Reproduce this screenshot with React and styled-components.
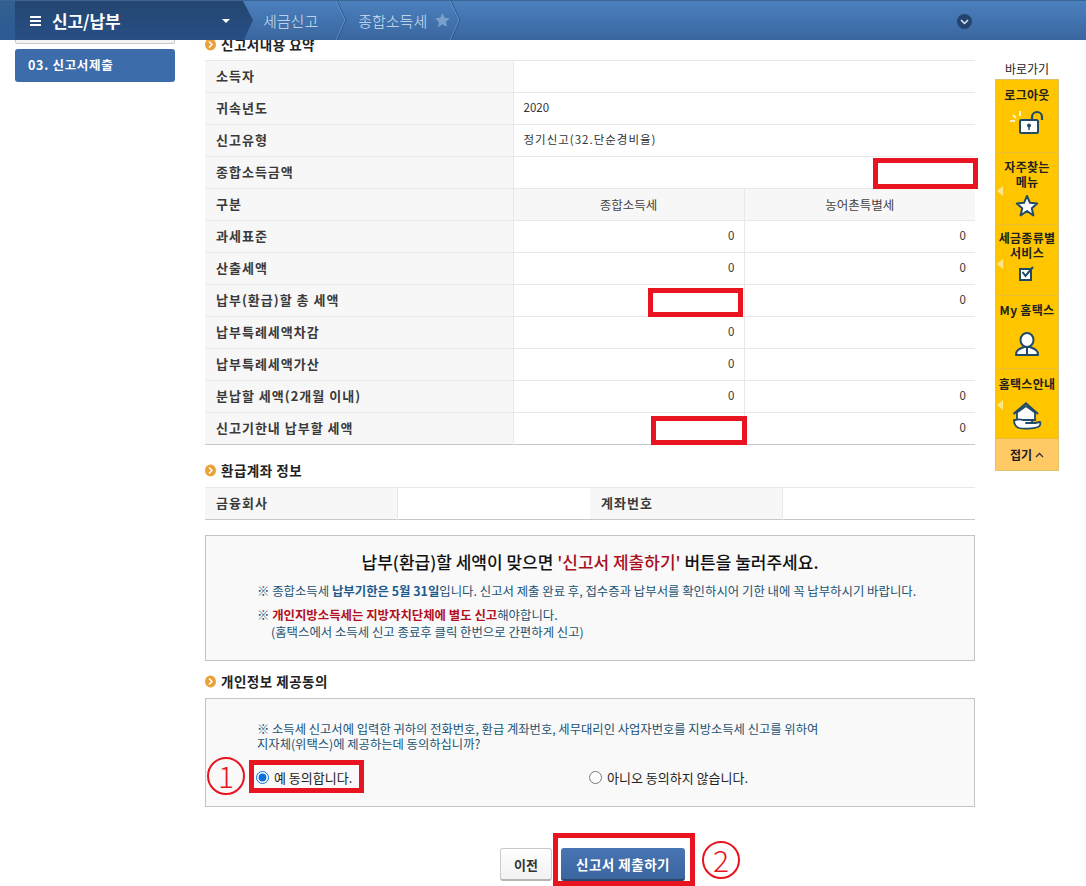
import styled, { createGlobalStyle } from 'styled-components'

const GlobalStyle = createGlobalStyle`
html, body {
  margin: 0;
  padding: 0;
  background: #fff;
  overflow: hidden;
}
body {
  font-family: "Noto Sans CJK KR", "Liberation Sans", sans-serif;
  font-size: 12px;
  color: #333;
}
* { box-sizing: border-box; }
`;

//Top bar
const TopBar = styled.header`
position: fixed;
top: 0;
left: 0;
right: 0;
height: 40px;
z-index: 5;
display: flex;
align-items: stretch;
background: linear-gradient(#4a80bd, #3a669f);
border-top: 1px solid #3a6496;
`;

const EdgeStrip = styled.div`
width: 15px;
background: linear-gradient(#31608f, #2c5a94);
`;

const MenuHead = styled.div`
width: 238px;
display: flex;
align-items: center;
padding: 0 23px 0 15px;
color: #fff;
background: linear-gradient(#24466f, #274f86);
clip-path: polygon(0 0, 228px 0, 238px 19px, 229px 100%, 0 100%);
`;

const MenuTitle = styled.span`
font-size: 17px;
font-weight: 700;
letter-spacing: -0.1px;
margin-left: 11px;
flex: 1;
`;

const Caret = styled.span`
width: 0;
height: 0;
border: 4px solid transparent;
border-top: 4px solid #fff;
border-bottom: 0;
`;

const Crumb = styled.div`
display: flex;
align-items: center;
color: #d3e1f2;
font-size: 15px;
font-weight: 300;
height: 100%;
padding-left: ${p => p.$pad}px;
`;

const StarSlot = styled.span`
display: flex;
margin-left: 8px;
`;

const CrumbLine = styled.svg`
width: 11px;
height: 39px;
margin-left: ${p => p.$gap}px;
`;

const RoundToggle = styled.span`
position: absolute;
left: 957px;
top: 13px;
width: 15px;
height: 15px;
border-radius: 50%;
background: #23446f;
display: flex;
align-items: center;
justify-content: center;
`;

//Page columns
const Page = styled.div`
height: 886px;
overflow: hidden;
display: grid;
grid-template-columns: 205px 770px 84px;
`;

const Side = styled.aside`
padding: 36px 30px 0 15px;
display: flex;
flex-direction: column;
gap: 5px;
`;

const SideStep = styled.div`
height: 8px;
border: 1px solid #c8c8c8;
border-radius: 2px;
background: #f4f4f4;
`;

const SideActive = styled.div`
height: 33px;
background: #3d6cab;
border-radius: 3px;
color: #fff;
font-size: 12.5px;
font-weight: 700;
line-height: 31px;
padding-left: 13px;
letter-spacing: 0.7px;
`;

const Main = styled.main`
padding-top: 36px;
`;

const Heading = styled.h3`
margin: ${p => p.$top || 0}px 0 ${p => p.$bottom || 8}px;
display: flex;
align-items: center;
gap: 5px;
height: 16px;
font-size: 13.5px;
font-weight: 700;
color: #222;
letter-spacing: 0.5px;
`;

//Tables
const Table = styled.table`
width: 770px;
table-layout: fixed;
border-collapse: collapse;
border-top: 1px solid #c8c8c8;
border-bottom: 1px solid #c8c8c8;
`;

const Label = styled.th`
height: 32px;
background: #f7f7f7;
border-top: 1px solid #e8e8e8;
border-right: 1px solid #e8e8e8;
padding: 0 0 3px 11px;
text-align: left;
font-size: 13px;
font-weight: 700;
color: #3a3a3a;
letter-spacing: 1px;
`;

const Head = styled.th`
background: #f7f7f7;
border-top: 1px solid #e8e8e8;
border-left: 1px solid #e8e8e8;
padding-bottom: 2px;
font-size: 12.5px;
font-weight: 400;
color: #444;
`;

const Cell = styled.td`
position: relative;
height: 32px;
border-top: 1px solid #e8e8e8;
border-left: 1px solid #e8e8e8;
padding: ${p => (p.$left ? '0 0 3px 10px' : '0 9px 3px 0')};
text-align: ${p => (p.$left ? 'left' : 'right')};
font-size: 11.5px;
letter-spacing: ${p => (p.$wide ? '1px' : '0')};
color: #333;
`;

const RedBox = styled.span`
position: absolute;
border: 5px solid #e8141f;
left: ${p => p.$l}px;
top: ${p => p.$t}px;
width: ${p => p.$w}px;
height: ${p => p.$h}px;
`;

//Notice boxes
const NoticeBox = styled.section`
margin-top: ${p => p.$top}px;
height: ${p => p.$h}px;
background: #f9f9f9;
border: 1px solid #c4c4c4;
padding-top: ${p => p.$pad}px;
`;

const NoticeTitle = styled.p`
margin: 0 0 9px;
text-align: center;
font-size: 17px;
font-weight: 500;
line-height: 24px;
color: #111;
`;

const Emph = styled.span`
color: #a8101f;
`;

const Note = styled.p`
margin: ${p => p.$top || 0}px 0 0 ${p => p.$left || 51}px;
font-size: ${p => p.$size || 12.4}px;
line-height: ${p => p.$lh || 16}px;
color: #1a5272;
font-weight: 400;
white-space: nowrap;
`;

const Blue = styled.b`
color: #1f5a8c;
font-weight: 700;
`;

const Crimson = styled.b`
color: #b30f22;
font-weight: 700;
`;

const RadioRow = styled.div`
display: grid;
grid-template-columns: 333px 1fr;
margin: 17px 0 0 50px;
`;

const RadioLabel = styled.label`
position: relative;
display: inline-flex;
align-items: center;
gap: 5px;
height: 16px;
font-size: 13px;
color: #222;
`;

const Radio = styled.input`
margin: 0;
width: 13px;
height: 13px;
accent-color: #0a6fd8;
`;

const Mark = styled.span`
position: absolute;
left: ${p => p.$l}px;
top: ${p => p.$t}px;
width: 38px;
height: 38px;
border: 2px solid #e8141f;
border-radius: 50%;
color: #e8141f;
font-size: 30px;
font-weight: 300;
line-height: 33px;
text-align: center;
`;

//Buttons
const Buttons = styled.div`
display: flex;
justify-content: center;
gap: 9px;
margin-top: 41px;
padding-left: 5px;
`;

const PrevButton = styled.button`
width: 52px;
height: 33px;
border: 1px solid #c9c9c9;
border-bottom: 2px solid #b5b5b5;
border-radius: 3px;
background: linear-gradient(#fff, #f1f1f1);
font: 700 13px "Noto Sans CJK KR", sans-serif;
color: #333;
`;

const SubmitWrap = styled.div`
position: relative;
`;

const SubmitButton = styled.button`
width: 124px;
height: 33px;
border: 0;
border-bottom: 2px solid #28466e;
border-radius: 3px;
background: linear-gradient(#4876b3, #3a659f);
font: 700 13.5px "Noto Sans CJK KR", sans-serif;
color: #fff;
letter-spacing: 0.5px;
`;

//Right rail
const Rail = styled.aside`
padding: 61px 0 0 20px;
`;

const RailTitle = styled.div`
width: 64px;
height: 18px;
line-height: 15px;
text-align: center;
font-size: 12px;
color: #222;
`;

const RailBox = styled.div`
width: 64px;
border: 1px solid #dcc26a;
background: #ffc600;
`;

const RailItem = styled.div`
position: relative;
height: ${p => p.$h}px;
border-bottom: 1px solid #e8bd3b;
padding-top: ${p => p.$pad || 8}px;
display: flex;
flex-direction: column;
align-items: center;
font-size: 12px;
font-weight: 700;
line-height: 14.5px;
letter-spacing: 0.3px;
color: #222;
text-align: center;
white-space: nowrap;
${p => p.$arrow && `
&::before {
  content: '';
  position: absolute;
  left: 1px;
  top: ${p.$arrow}px;
  border: 5px solid transparent;
  border-right: 6px solid #ffe58c;
  border-left: 0;
}`}
`;

const IconSlot = styled.span`
display: flex;
margin-top: ${p => p.$top || 6}px;
`;

const Fold = styled.div`
height: 31px;
background: #ffca66;
font-size: 12px;
font-weight: 700;
color: #222;
display: flex;
align-items: center;
justify-content: center;
gap: 3px;
`;

const Bullet = () => (
    <svg width="11" height="13" viewBox="0 0 11 13">
        <ellipse cx="5.5" cy="6.5" rx="5.5" ry="6" fill="#e9a23b" />
        <path d="M4 3.5 7 6.5 4 9.5" fill="none" stroke="#fff" strokeWidth="1.5" />
    </svg>
);

const Chevron = ({ gap }) => (
    <CrumbLine $gap={gap} viewBox="0 0 11 39">
        <path d="M1 0 10 19 1 39" fill="none" stroke="#2d5688" strokeWidth="1" />
        <path d="M0 0 9 19 0 39" fill="none" stroke="#78a2d2" strokeWidth="0.6" />
    </CrumbLine>
);

const LockIcon = () => (
    <svg width="38" height="24" viewBox="0 0 38 24">
        <path d="M24 11V7a5 5 0 0 1 10 0v3" fill="none" stroke="#1f4a68" strokeWidth="2.2" />
        <rect x="12" y="10" width="18" height="13" rx="1.5" fill="#fff" stroke="#1f4a68" strokeWidth="2" />
        <circle cx="21" cy="15.500" r="2" fill="#1f4a68" />
        <path d="M21 16v4" stroke="#1f4a68" strokeWidth="1.4" />
        <path d="M2 11h5M5 5l3 3M12 1v5" stroke="#fff" strokeWidth="1.6" />
    </svg>
);

const StarIcon = () => (
    <svg width="24" height="23" viewBox="0 0 24 23">
        <path d="M12 2l3 6.8 7.2.7-5.4 4.8 1.6 7.2L12 17l-6.4 4.5 1.6-7.2L1.8 9.500l7.200-.7z" fill="#fff" stroke="#1f4a68" strokeWidth="2" strokeLinejoin="round" />
    </svg>
);

const CheckIcon = () => (
    <svg width="20" height="15" viewBox="0 0 20 15">
        <rect x="3" y="3" width="11" height="11" fill="#fff" stroke="#1f4a68" strokeWidth="2" />
        <path d="M5.500 6 8.500 10 16 1" fill="none" stroke="#1f4a68" strokeWidth="2" />
    </svg>
);

const PersonIcon = () => (
    <svg width="26" height="25" viewBox="0 0 26 25">
        <path d="M2 23c0-5 3-6 8-8h6c5 2 8 3 8 8z" fill="#fff" stroke="#1f4a68" strokeWidth="2" strokeLinejoin="round" />
        <ellipse cx="13" cy="8" rx="6.500" ry="7" fill="#fff" stroke="#1f4a68" strokeWidth="2" />
        <path d="M13 15v7" stroke="#1f4a68" strokeWidth="2" />
    </svg>
);

const HomeIcon = () => (
    <svg width="30" height="28" viewBox="0 0 30 28">
        <path d="M1.500 12 14 1.500l12 10.500" fill="none" stroke="#1f4a68" strokeWidth="2.200" />
        <path d="M5 10.500V18h18v-7.500L14 4z" fill="#fff" stroke="#1f4a68" strokeWidth="1.800" />
        <path d="M2 19c3-2 6-2 9-1h7c3 0 3 3 0 3h-4 9l5-1c1 2 0 4-2 5-5 2-15 2-19 1-3-1-5-4-5-8z" fill="#fff" stroke="#1f4a68" strokeWidth="1.800" strokeLinejoin="round" />
    </svg>
);

const amountRows = [
    ['과세표준', '0', '0'],
    ['산출세액', '0', '0'],
    ['납부(환급)할 총 세액', '', '0', { l: -97, t: 3, w: 95, h: 29 }],
    ['납부특례세액차감', '0', ''],
    ['납부특례세액가산', '0', ''],
    ['분납할 세액(2개월 이내)', '0', '0'],
    ['신고기한내 납부할 세액', '', '0', { l: -94, t: 3, w: 96, h: 29 }],
];

const App = () => {
    return (
        <>
            <GlobalStyle />
            <TopBar>
                <EdgeStrip />
                <MenuHead>
                    <svg width="11" height="10" viewBox="0 0 11 10">
                        <path d="M0 1h11M0 5h11M0 9h11" stroke="#fff" strokeWidth="2" />
                    </svg>
                    <MenuTitle>신고/납부</MenuTitle>
                    <Caret />
                </MenuHead>
                <Crumb $pad={10}>세금신고</Crumb>
                <Chevron gap={18} />
                <Crumb $pad={11}>종합소득세</Crumb>
                <StarSlot>
                    <svg width="15" height="39" viewBox="0 0 15 39">
                        <path d="M7.500 12l2.200 4.700 5 .6-3.700 3.400 1 5-4.500-2.500L3 26.200l1-5L.3 17.300l5-.6z" fill="#7ca0cd" />
                    </svg>
                </StarSlot>
                <Chevron gap={0} />
                <RoundToggle>
                    <svg width="9" height="6" viewBox="0 0 9 6">
                        <path d="M1 1l3.500 3.500L8 1" fill="none" stroke="#dfe8f3" strokeWidth="1.500" />
                    </svg>
                </RoundToggle>
            </TopBar>
            <Page>
                <Side>
                    <SideStep />
                    <SideActive>03. 신고서제출</SideActive>
                </Side>
                <Main>
                    <Heading><Bullet />신고서내용 요약</Heading>
                    <Table>
                        <colgroup>
                            <col style={{ width: 308 }} />
                            <col style={{ width: 231 }} />
                            <col style={{ width: 231 }} />
                        </colgroup>
                        <tbody>
                            <tr><Label>소득자</Label><Cell $left colSpan={2} /></tr>
                            <tr><Label>귀속년도</Label><Cell $left colSpan={2}>2020</Cell></tr>
                            <tr><Label>신고유형</Label><Cell $left $wide colSpan={2}>정기신고(32.단순경비율)</Cell></tr>
                            <tr>
                                <Label>종합소득금액</Label>
                                <Cell $left colSpan={2}><RedBox $l={359} $t={1} $w={105} $h={31} /></Cell>
                            </tr>
                            <tr><Label>구분</Label><Head>종합소득세</Head><Head>농어촌특별세</Head></tr>
                            {amountRows.map(([name, a, b, box]) => (
                                <tr key={name}>
                                    <Label>{name}</Label>
                                    <Cell>{a}</Cell>
                                    <Cell>{b}{box && <RedBox $l={box.l} $t={box.t} $w={box.w} $h={box.h} />}</Cell>
                                </tr>
                            ))}
                        </tbody>
                    </Table>
                    <Heading $top={17} $bottom={9}><Bullet />환급계좌 정보</Heading>
                    <Table>
                        <tbody>
                            <tr>
                                <Label>금융회사</Label><Cell />
                                <Label>계좌번호</Label><Cell />
                            </tr>
                        </tbody>
                    </Table>
                    <NoticeBox $top={15} $h={126} $pad={14}>
                        <NoticeTitle>납부(환급)할 세액이 맞으면 <Emph>'신고서 제출하기'</Emph> 버튼을 눌러주세요.</NoticeTitle>
                        <Note>※ 종합소득세 <Blue>납부기한은 5월 31일</Blue>입니다. 신고서 제출 완료 후, 접수증과 납부서를 확인하시어 기한 내에 꼭 납부하시기 바랍니다.</Note>
                        <Note $top={8}>※ <Crimson>개인지방소득세는 지방자치단체에 별도 신고</Crimson>해야합니다.</Note>
                        <Note $left={65} $top={1}>(홈택스에서 소득세 신고 종료후 클릭 한번으로 간편하게 신고)</Note>
                    </NoticeBox>
                    <Heading $top={12} $bottom={9}><Bullet />개인정보 제공동의</Heading>
                    <NoticeBox $top={0} $h={109} $pad={23}>
                        <Note $size={12.3} $lh={15}>※ 소득세 신고서에 입력한 귀하의 전화번호, 환급 계좌번호, 세무대리인 사업자번호를 지방소득세 신고를 위하여</Note>
                        <Note $size={12.3} $lh={15}>지자체(위택스)에 제공하는데 동의하십니까?</Note>
                        <RadioRow>
                            <div>
                                <RadioLabel>
                                    <Radio type="radio" name="agree" defaultChecked />예 동의합니다.
                                    <RedBox $l={-7} $t={-9} $w={115} $h={33} />
                                    <Mark $l={-49} $t={-12}>1</Mark>
                                </RadioLabel>
                            </div>
                            <div>
                                <RadioLabel>
                                    <Radio type="radio" name="agree" />아니오 동의하지 않습니다.
                                </RadioLabel>
                            </div>
                        </RadioRow>
                    </NoticeBox>
                    <Buttons>
                        <PrevButton>이전</PrevButton>
                        <SubmitWrap>
                            <SubmitButton>신고서 제출하기</SubmitButton>
                            <RedBox $l={-8} $t={-15} $w={142} $h={53} />
                            <Mark $l={141} $t={-7}>2</Mark>
                        </SubmitWrap>
                    </Buttons>
                </Main>
                <Rail>
                    <RailTitle>바로가기</RailTitle>
                    <RailBox>
                        <RailItem $h={73}>로그아웃<IconSlot $top={7}><LockIcon /></IconSlot></RailItem>
                        <RailItem $h={72} $arrow={33} $pad={7}>자주찾는<br />메뉴<IconSlot $top={5}><StarIcon /></IconSlot></RailItem>
                        <RailItem $h={71} $arrow={34} $pad={6}>세금종류별<br />서비스<IconSlot $top={6}><CheckIcon /></IconSlot></RailItem>
                        <RailItem $h={73} $pad={7}>My 홈택스<IconSlot $top={14}><PersonIcon /></IconSlot></RailItem>
                        <RailItem $h={70} $arrow={31} $pad={8}>홈택스안내<IconSlot $top={10}><HomeIcon /></IconSlot></RailItem>
                        <Fold>
                            접기
                            <svg width="9" height="6" viewBox="0 0 9 6">
                                <path d="M1 5l3.500-3.500L8 5" fill="none" stroke="#333" strokeWidth="1.300" />
                            </svg>
                        </Fold>
                    </RailBox>
                </Rail>
            </Page>
        </>
    );
};

export default App;
